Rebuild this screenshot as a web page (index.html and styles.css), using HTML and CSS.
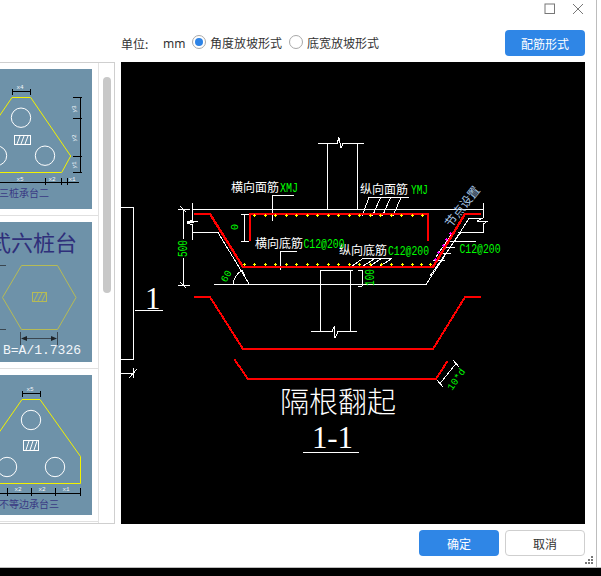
FILE: index.html
```html
<!DOCTYPE html>
<html lang="zh">
<head>
<meta charset="utf-8">
<title>配筋</title>
<link rel="stylesheet" href="styles.css">
</head>
<body>
<div class="window">
  <div class="titlebar">
    <svg class="win-icon" width="12" height="12" viewBox="0 0 12 12"><rect x="1" y="1" width="9.5" height="9.5" class="win-glyph"/></svg>
    <svg class="win-icon" width="12" height="12" viewBox="0 0 12 12"><path d="M1 1L11 11M11 1L1 11" class="win-glyph"/></svg>
  </div>
  <div class="toolbar">
    <span class="label">单位:</span>
    <span class="unit">mm</span>
    <span class="radio radio-on"></span><span class="radio-text">角度放坡形式</span>
    <span class="radio"></span><span class="radio-text">底宽放坡形式</span>
    <button class="btn btn-primary btn-push">配筋形式</button>
  </div>
  <div class="main">
    <div class="panel">
      <div class="list">
        <div class="item">
          <svg class="thumb" width="92" height="140" viewBox="0 69 92 140">
            <rect x="0" y="69" width="92" height="140" class="t-bg"/>
            <path d="M-2 118L12 97.5H30.7L70.7 156L61.7 172.5H-2" class="t-y"/>
            <circle cx="21" cy="117.7" r="9.7" class="t-w"/><circle cx="45" cy="155.7" r="9.7" class="t-w"/><circle cx="-3" cy="155.7" r="9.7" class="t-w"/>
            <rect x="14.5" y="135.5" width="16" height="9" class="t-w"/>
            <path d="M17 144L20 136M21 144L24 136M25 144L28 136" class="t-w"/>
            <path d="M12.5 91.5H30.5M12.5 88.5V95M30.5 88.5V95M80 97.5V172.5M73 97.5H81.5M73 118.5H81.5M73 156H81.5M73 172.5H81.5M0 182.5H79M45.5 177.5V185M61.5 177.5V185M67.5 177.5V185" class="t-k"/>
            <text x="20" y="89" class="t-dim">x4</text>
            <text x="52" y="181" class="t-dim">x2</text><text x="72" y="181" class="t-dim">x1</text><text x="20" y="181" class="t-dim">x5</text>
            <text transform="translate(75.5 109) rotate(-90)" class="t-dim">y3</text>
            <text transform="translate(75.5 138) rotate(-90)" class="t-dim">y2</text>
            <text transform="translate(75.5 165) rotate(-90)" class="t-dim">y1</text>
            <text x="-1" y="197" class="t-cap">三桩承台二</text>
          </svg>
        </div>
        <div class="item">
          <svg class="thumb" width="92" height="140" viewBox="0 222 92 140">
            <rect x="0" y="222" width="92" height="140" class="t-bg"/>
            <text x="-11" y="251" class="t-title">式六桩台</text>
            <path d="M2.5 297.5L21.5 265.5H57.5L76 297.5L57.5 329.5H21.5Z" class="t-hex"/>
            <rect x="32.5" y="292.5" width="14" height="9" class="t-hex"/>
            <path d="M34 301L38 293M38 301L42 293M42 301L46 293" class="t-hex"/>
            <path d="M0 265.5H6M0 329.5H6M20.5 332V345M57.5 332V345M24 338.5H54" class="t-d"/>
            <path d="M21 338.5L27 336V341ZM57 338.5L51 336V341Z" class="t-a"/>
            <text x="3" y="354" class="t-b">B=A/1.7326</text>
          </svg>
        </div>
        <div class="item">
          <svg class="thumb" width="92" height="140" viewBox="0 375 92 140">
            <rect x="0" y="375" width="92" height="140" class="t-bg"/>
            <path d="M-2 434L22 399.5H40L80.5 456.5V483.5H-2" class="t-y"/>
            <circle cx="31" cy="420" r="9.7" class="t-w"/><circle cx="55" cy="467" r="9.7" class="t-w"/><circle cx="7" cy="467" r="9.7" class="t-w"/>
            <rect x="23.5" y="440.5" width="15" height="10" class="t-w"/>
            <path d="M26 450L29 441M30 450L33 441M34 450L37 441" class="t-w"/>
            <path d="M22.5 393.5H40.5M22.5 391V397M40.5 391V397M0 493.5H80.5M7.5 487.5V496M31.5 487.5V496M55.5 487.5V496M80.5 487.5V496" class="t-k"/>
            <text x="30" y="391" class="t-dim">x5</text>
            <text x="18" y="491" class="t-dim">x2</text><text x="42" y="491" class="t-dim">x2</text><text x="66" y="491" class="t-dim">x1</text>
            <text x="-1" y="508" class="t-cap">不等边承台三</text>
          </svg>
        </div>
      </div>
      <div class="scrolltrack"><div class="scrollthumb"></div></div>
    </div>
    <svg class="canvas" width="464" height="462" viewBox="121 62 464 462">
      <rect x="121" y="62" width="464" height="462" class="c-bg"/>
      <path class="w" d="M121 207.5H133.5V359.5H121M121 373.5H133.5M133.5 368V378M129 378L137 369M135 310.5H163"/>
      <path class="w" d="M192 209.5H483M178 209.5H190M183 209V239M183 258V285M178 285.5H190M180 206L186 212M180 282L186 288"/>
      <path class="w" d="M192.5 203V220L187 222L198 221.5L187 223L192.5 225V240M192.5 232.5H218L249.5 284.5M214 284.5H426L469 218.5H483M483 203V218L477 221H488L483 224V232.5H458"/>
      <path class="w" d="M318 143.5H337L339 137.5L341 148L343 143.5H364M327.5 143.5V209M357.5 143.5V209"/>
      <path class="w" d="M353 270.5H320.5V331.5M350.5 270.5V331.5M311 331.5H332L334.5 326L335 338L338 331.5H357"/>
      <path class="w" d="M244.5 214V242M241 214.5H249M241 241.5H249"/>
      <path class="w" d="M294 195.5H272V221M297 251.5H280.5V270"/>
      <path class="w" d="M409 197.5H369L362 216M380.5 197.5L372.5 216M390.5 197.5L382.5 216M401 197.5L393 216"/>
      <path class="w" d="M392 258.5H363L352 266M375 258.5L363 266M381.5 258.5L370 266M392 258.5L380 266"/>
      <path class="w" d="M476 241.5H448M444 247.5H455M440 253.5H451M433 260.5H445M461 232L444 256L430 276M453 232L436 257"/>
      <path class="w" d="M362 270V286M358 270.5H362M358 286.5H362"/>
      <path class="w" d="M233 284Q235 274 242 270.5L245 276"/>
      <path class="w" d="M440 383.5L456 363.5M437 380L443 387M453 360L459 367"/>
      <path class="w" d="M303 452.5H359"/>
      <path class="r" d="M194 214H210L243 267H433L465 214H481"/>
      <path class="r" d="M250 241V214H428V241"/>
      <path class="r r-thin" d="M194 297H210L243 349H433L465 297H481"/>
      <path class="r r-thin" d="M234.5 359.5L248 379H436L447.5 361"/>
      <path class="y" d="M254.5 214v3M253 215.5h3M265.5 214v3M264 215.5h3M275.5 214v3M274 215.5h3M286.5 214v3M285 215.5h3M296.5 214v3M295 215.5h3M307.5 214v3M306 215.5h3M317.5 214v3M316 215.5h3M328.5 214v3M327 215.5h3M338.5 214v3M337 215.5h3M349.5 214v3M348 215.5h3M359.5 214v3M358 215.5h3M370.5 214v3M369 215.5h3M380.5 214v3M379 215.5h3M391.5 214v3M390 215.5h3M401.5 214v3M400 215.5h3M412.5 214v3M411 215.5h3M422.5 214v3M421 215.5h3"/>
      <path class="y" d="M244.5 263v3M243 264.5h3M254.5 263v3M253 264.5h3M265.5 263v3M264 264.5h3M275.5 263v3M274 264.5h3M286.5 263v3M285 264.5h3M296.5 263v3M295 264.5h3M307.5 263v3M306 264.5h3M317.5 263v3M316 264.5h3M328.5 263v3M327 264.5h3M338.5 263v3M337 264.5h3M349.5 263v3M348 264.5h3M359.5 263v3M358 264.5h3M370.5 263v3M369 264.5h3M381.5 263v3M380 264.5h3M391.5 263v3M390 264.5h3M402.5 263v3M401 264.5h3M412.5 263v3M411 264.5h3M421.5 263v3M420 264.5h3M430.5 263v3M429 264.5h3"/>
      <path class="m" d="M450.5 232v3M449 233.5h3M446.5 238v3M445 239.5h3M443.5 244v3M442 245.5h3M438.5 251v3M437 252.5h3M435.5 258v3M434 259.5h3"/>
      <text x="231" y="192" class="lbl">横向面筋</text>
      <text x="360" y="194" class="lbl">纵向面筋</text>
      <text x="255" y="248" class="lbl">横向底筋</text>
      <text x="339" y="255" class="lbl">纵向底筋</text>
      <text x="280" y="192" class="grn" textLength="18" lengthAdjust="spacingAndGlyphs">XMJ</text>
      <text x="411" y="194" class="grn" textLength="17" lengthAdjust="spacingAndGlyphs">YMJ</text>
      <text x="303.5" y="247.5" class="grn" textLength="41" lengthAdjust="spacingAndGlyphs">C12@200</text>
      <text x="388" y="254.5" class="grn" textLength="41" lengthAdjust="spacingAndGlyphs">C12@200</text>
      <text x="459.5" y="252.5" class="grn" textLength="41" lengthAdjust="spacingAndGlyphs">C12@200</text>
      <text transform="translate(187 257) rotate(-90)" class="grn" textLength="17" lengthAdjust="spacingAndGlyphs">500</text>
      <text transform="translate(238 230) rotate(-90)" class="grn grn-sm">0</text>
      <text transform="translate(226 283) rotate(-60)" class="grn grn-sm" textLength="12" lengthAdjust="spacingAndGlyphs">60</text>
      <text transform="translate(374 286) rotate(-90)" class="grn" textLength="17" lengthAdjust="spacingAndGlyphs">100</text>
      <text transform="translate(452 391) rotate(-55)" class="grn grn-sm" textLength="24" lengthAdjust="spacingAndGlyphs">10*d</text>
      <text transform="translate(451 228) rotate(-52)" class="node">节点设置</text>
      <text x="145" y="309" class="num">1</text>
      <text x="280" y="413" class="big">隔根翻起</text>
      <text x="312" y="448" class="num" textLength="41" lengthAdjust="spacing">1-1</text>
    </svg>
  </div>
  <div class="footer">
    <button class="btn btn-primary">确定</button>
    <button class="btn btn-plain">取消</button>
    <svg class="grip" width="9" height="9" viewBox="0 0 9 9"><path d="M6 0h2v2H6zM3 3h2v2H3zM6 3h2v2H6zM0 6h2v2H0zM3 6h2v2H3zM6 6h2v2H6z"/></svg>
  </div>
</div>
<div class="strip"></div>
</body>
</html>
```
FILE: styles.css
```css
* { box-sizing: border-box; }
html, body { margin: 0; height: 100%; background: #fff; }
body {
  width: 601px;
  height: 576px;
  overflow: hidden;
  display: flex;
  flex-direction: column;
  font-family: "Noto Sans CJK SC", "Liberation Sans", sans-serif;
  font-size: 12px;
  color: #333;
}
.window {
  position: relative;
  width: 597px;
  height: 567px;
  padding-right: 11px;
  border-right: 1px solid #bdbdbd;
  background: #fff;
  display: flex;
  flex-direction: column;
}
.strip {
  flex: 1;
  background: #000;
  border-top: 1px solid #bdbdbd;
}
.titlebar {
  height: 30px;
  display: flex;
  justify-content: flex-end;
  align-items: flex-start;
  gap: 16px;
  padding-top: 3px;
  margin-right: 1px;
}
.win-icon { display: block; }
.win-glyph { fill: none; stroke: #777; stroke-width: 1; }
.toolbar {
  height: 26px;
  display: flex;
  align-items: center;
  padding-left: 121px;
}
.label { width: 42px; margin-top: 1px; }
.unit { width: 29px; font-family: "Noto Sans", sans-serif; margin-top: 1px; }
.radio {
  width: 14px;
  height: 14px;
  border: 1px solid #a8a8a8;
  border-radius: 50%;
  background: #fff;
  margin-right: 4px;
  margin-top: -2px;
  flex: none;
  position: relative;
}
.radio-on::after {
  content: "";
  position: absolute;
  left: 2px;
  top: 2px;
  width: 8px;
  height: 8px;
  border-radius: 50%;
  background: #2d83e6;
}
.radio-text { width: 79px; margin-top: -1px; white-space: nowrap; }
.btn {
  width: 80px;
  height: 26px;
  padding: 0;
  border-radius: 4px;
  border: 1px solid transparent;
  font: inherit;
  display: block;
}
.btn-primary { background: #2f86e6; color: #fff; }
.btn-plain { background: #fff; border-color: #cfcfcf; color: #333; }
.btn-push { margin-left: auto; }
.main {
  height: 462px;
  margin-top: 6px;
  display: flex;
  gap: 6px;
}
.panel {
  width: 115px;
  height: 462px;
  flex: none;
  display: flex;
  border: solid #cfcfcf;
  border-width: 1px 1px 1px 0;
}
.list {
  width: 99px;
  height: 460px;
  border-right: 1px solid #e2e2e2;
  flex: none;
}
.item {
  height: 153px;
  padding: 6px 0;
  border-bottom: 1px solid #e0e0e0;
}
.thumb { display: block; }
.scrolltrack { flex: 1; padding: 14px 3px 0 4px; }
.scrollthumb {
  width: 8px;
  height: 216px;
  border-radius: 4px;
  background: #c8c8c8;
}
.t-bg { fill: #6e92a9; }
.t-y { fill: none; stroke: #f2f200; stroke-width: 1; }
.t-w { fill: none; stroke: #fff; stroke-width: 1; }
.t-k { fill: none; stroke: #000; stroke-width: 1; shape-rendering: crispEdges; }
.t-hex { fill: none; stroke: #b6bb55; stroke-width: 1; }
.t-d { fill: none; stroke: #3a4650; stroke-width: 1; }
.t-a { fill: #1d2226; }
.t-dim { font-family: "Liberation Mono", monospace; font-size: 6px; fill: #f2f6fa; text-anchor: middle; }
.t-cap { font-size: 10px; fill: #3a3a84; }
.t-title { font-size: 22px; fill: #2f2f7a; }
.t-b { font-family: "Liberation Mono", monospace; font-size: 13px; fill: #f2f6fa; }
.canvas { display: block; flex: none; }
.c-bg { fill: #000; }
.w { fill: none; stroke: #fff; stroke-width: 1; shape-rendering: crispEdges; }
.r { fill: none; stroke: #f00; stroke-width: 2.4; shape-rendering: crispEdges; }
.r-thin { stroke-width: 2; }
.y { fill: none; stroke: #ff0; stroke-width: 1; shape-rendering: crispEdges; }
.m { fill: none; stroke: #f0f; stroke-width: 1; shape-rendering: crispEdges; }
.lbl { font-size: 12px; fill: #fff; }
.grn { font-family: "Liberation Mono", monospace; font-size: 12px; fill: #0f0; }
.grn-sm { font-size: 10px; }
.node { font-size: 12px; fill: #a9c8e6; }
.num { font-family: "Liberation Serif", serif; font-size: 31px; fill: #fff; }
.big { font-size: 29px; fill: #fff; font-weight: 300; }
.footer {
  height: 26px;
  margin-top: 6px;
  display: flex;
  justify-content: flex-end;
  gap: 6px;
}
.grip { position: absolute; right: 2px; bottom: 2px; fill: #777; }
```
